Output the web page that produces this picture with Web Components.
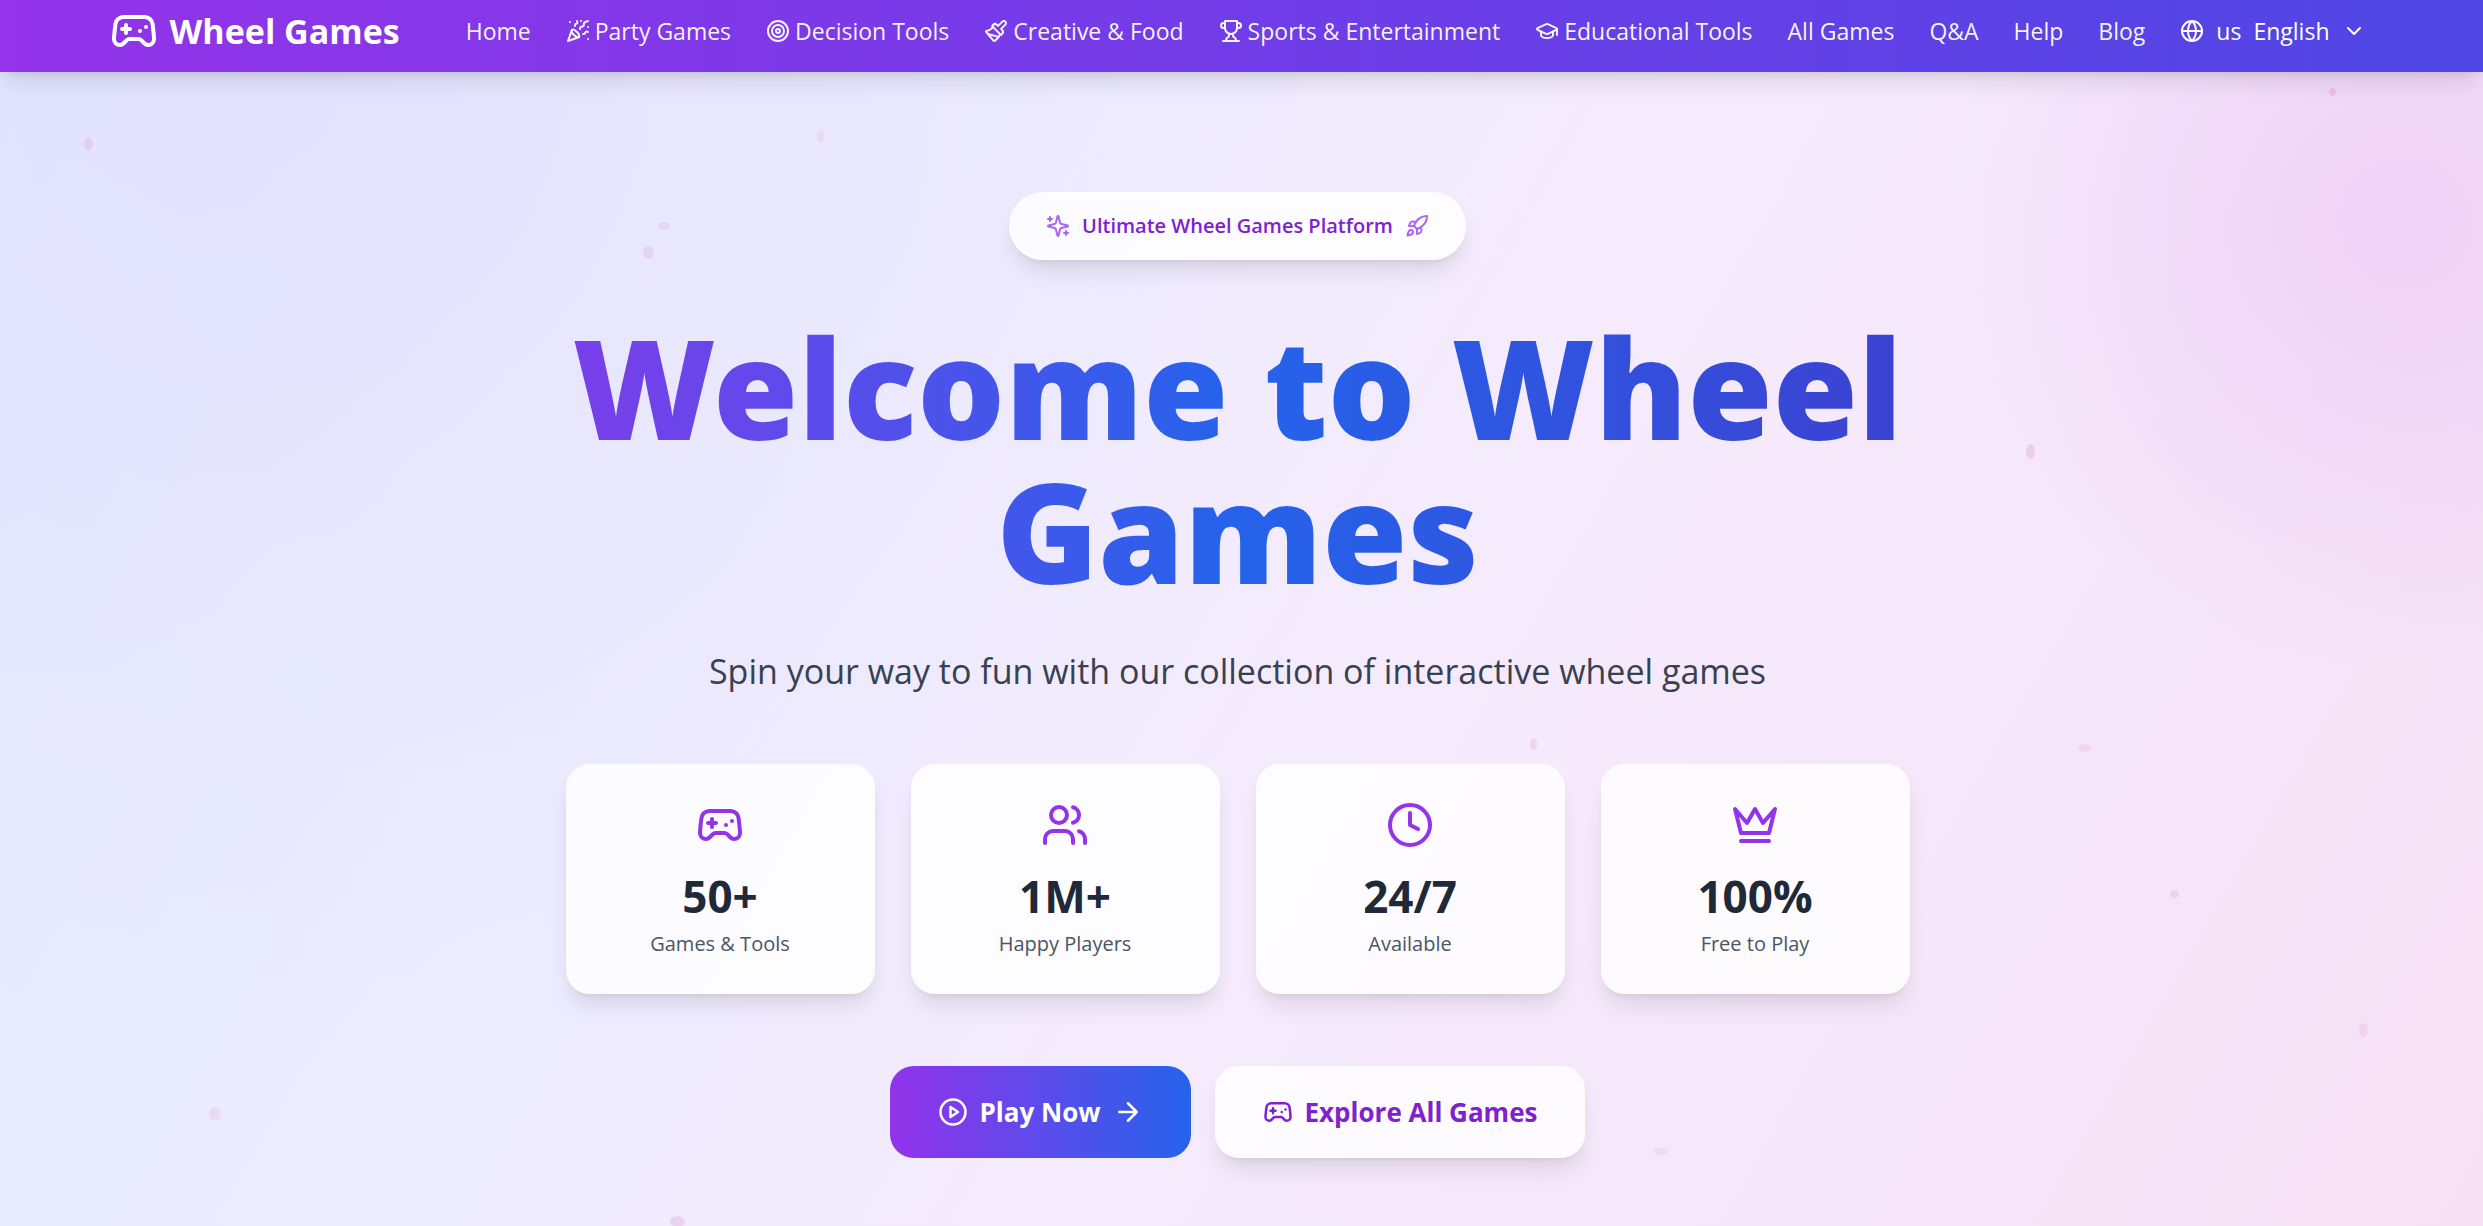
<!DOCTYPE html>
<html lang="en">
<head>
<meta charset="UTF-8">
<meta name="viewport" content="width=device-width, initial-scale=1.0">
<title>Wheel Games</title>
<style>
  :root {
    --purple: #9333ea;
    --purple-dark: #7e22ce;
    --blue: #2563eb;
    --indigo: #4f46e5;
    --card: rgba(255, 255, 255, 0.82);
    --shadow: 0 15px 23px -5px rgba(0, 0, 0, 0.1), 0 6px 9px -6px rgba(0, 0, 0, 0.1);
    --gutter: 8px;
  }
  body {
    margin: 0;
    font-family: "Open Sans", "Noto Sans", sans-serif;
    color: #1f2937;
    overflow-x: hidden;
  }
</style>
</head>
<body>
<site-header>
  <site-brand slot="brand">Wheel Games</site-brand>
  <nav-link href="#home">Home</nav-link>
  <nav-link href="#party" icon="party">Party Games</nav-link>
  <nav-link href="#decision" icon="target">Decision Tools</nav-link>
  <nav-link href="#creative" icon="brush">Creative &amp; Food</nav-link>
  <nav-link href="#sports" icon="trophy">Sports &amp; Entertainment</nav-link>
  <nav-link href="#education" icon="cap">Educational Tools</nav-link>
  <nav-link href="#all">All Games</nav-link>
  <nav-link href="#qa">Q&amp;A</nav-link>
  <nav-link href="#help">Help</nav-link>
  <nav-link href="#blog">Blog</nav-link>
  <language-button code="us">English</language-button>
</site-header>

<hero-section>
  <hero-badge slot="badge">Ultimate Wheel Games Platform</hero-badge>
  <span slot="title">Welcome to Wheel Games</span>
  <span slot="subtitle">Spin your way to fun with our collection of interactive wheel games</span>
  <stat-card slot="stats" icon="gamepad" value="50+">Games &amp; Tools</stat-card>
  <stat-card slot="stats" icon="users" value="1M+">Happy Players</stat-card>
  <stat-card slot="stats" icon="clock" value="24/7">Available</stat-card>
  <stat-card slot="stats" icon="crown" value="100%">Free to Play</stat-card>
  <action-link slot="actions" href="#play" icon="play" trailing="arrow" primary>Play Now</action-link>
  <action-link slot="actions" href="#all" icon="gamepad">Explore All Games</action-link>
</hero-section>

<script>
const ICONS = {
  gamepad: '<path d="M6 11h4M8 9v4M15 12h.01M18 10h.01"/><path d="M17.32 5H6.68a4 4 0 0 0-3.978 3.59c-.006.052-.01.101-.017.152C2.604 9.416 2 14.456 2 16a3 3 0 0 0 3 3c1 0 1.5-.5 2-1l1.414-1.414A2 2 0 0 1 9.828 16h4.344a2 2 0 0 1 1.414.586L17 18c.5.5 1 1 2 1a3 3 0 0 0 3-3c0-1.545-.604-6.584-.685-7.258-.007-.05-.011-.1-.017-.151A4 4 0 0 0 17.32 5z"/>',
  party: '<path d="M5.8 11.3 2 22l10.7-3.79M4 3h.01M22 8h.01M15 2h.01M22 20h.01"/><path d="m22 2-2.24.75a2.9 2.9 0 0 0-1.96 3.12c.1.86-.57 1.63-1.45 1.63h-.38c-.86 0-1.6.6-1.76 1.44L14 10"/><path d="m22 13-.82-.33c-.86-.34-1.82.2-1.98 1.11c-.11.7-.72 1.22-1.43 1.22H17"/><path d="m11 2 .33.82c.34.86-.2 1.82-1.11 1.98C9.52 4.9 9 5.52 9 6.23V7"/><path d="M11 13c1.93 1.93 2.83 4.17 2 5-.83.83-3.07-.07-5-2-1.93-1.93-2.83-4.17-2-5 .83-.83 3.07.07 5 2Z"/>',
  target: '<circle cx="12" cy="12" r="10"/><circle cx="12" cy="12" r="6"/><circle cx="12" cy="12" r="2"/>',
  brush: '<path d="m14.622 17.897-10.68-2.913"/><path d="M18.376 2.622a1 1 0 1 1 3.002 3.002L17.36 9.643a.5.5 0 0 0 0 .707l.944.944a2.41 2.41 0 0 1 0 3.408l-.944.944a.5.5 0 0 1-.707 0L8.354 7.348a.5.5 0 0 1 0-.707l.944-.944a2.41 2.41 0 0 1 3.408 0l.944.944a.5.5 0 0 0 .707 0z"/><path d="M9 8c-1.804 2.71-3.97 3.46-6.583 3.948a.507.507 0 0 0-.302.819l7.32 8.883a1 1 0 0 0 1.185.204C12.735 20.405 16 16.792 16 15"/>',
  trophy: '<path d="M6 9H4.5a2.5 2.5 0 0 1 0-5H6M18 9h1.5a2.5 2.5 0 0 0 0-5H18M4 22h16"/><path d="M10 14.66V17c0 .55-.47.98-.97 1.21C7.85 18.75 7 20.24 7 22M14 14.66V17c0 .55.47.98.97 1.21C16.15 18.75 17 20.24 17 22M18 2H6v7a6 6 0 0 0 12 0V2Z"/>',
  cap: '<path d="M21.42 10.922a1 1 0 0 0-.019-1.838L12.83 5.18a2 2 0 0 0-1.66 0L2.6 9.08a1 1 0 0 0 0 1.832l8.57 3.908a2 2 0 0 0 1.66 0z"/><path d="M22 10v6M6 12.5V16a6 3 0 0 0 12 0v-3.5"/>',
  globe: '<circle cx="12" cy="12" r="10"/><path d="M12 2a14.5 14.5 0 0 0 0 20 14.5 14.5 0 0 0 0-20M2 12h20"/>',
  chevron: '<path d="m6 9 6 6 6-6"/>',
  sparkles: '<path d="M9.937 15.5A2 2 0 0 0 8.5 14.063l-6.135-1.582a.5.5 0 0 1 0-.962L8.5 9.936A2 2 0 0 0 9.937 8.5l1.582-6.135a.5.5 0 0 1 .963 0L14.063 8.5A2 2 0 0 0 15.5 9.937l6.135 1.581a.5.5 0 0 1 0 .964L15.5 14.063a2 2 0 0 0-1.437 1.437l-1.582 6.135a.5.5 0 0 1-.963 0z"/><path d="M20 17v4M22 19h-4M4 3v4M6 5H2"/>',
  rocket: '<path d="M4.5 16.5c-1.5 1.26-2 5-2 5s3.74-.5 5-2c.71-.84.7-2.13-.09-2.91a2.18 2.18 0 0 0-2.91-.09z"/><path d="m12 15-3-3a22 22 0 0 1 2-3.95A12.88 12.88 0 0 1 22 2c0 2.72-.78 7.5-6 11a22.35 22.35 0 0 1-4 2z"/><path d="M9 12H4s.55-3.03 2-4c1.62-1.08 5 0 5 0M12 15v5s3.03-.55 4-2c1.08-1.62 0-5 0-5"/>',
  users: '<path d="M16 21v-2a4 4 0 0 0-4-4H6a4 4 0 0 0-4 4v2"/><circle cx="9" cy="7" r="4"/><path d="M22 21v-2a4 4 0 0 0-3-3.87M16 3.13a4 4 0 0 1 0 7.75"/>',
  clock: '<circle cx="12" cy="12" r="10"/><path d="M12 6v6l4 2"/>',
  crown: '<path d="m2 4 3 12h14l3-12-6 7-4-7-4 7-6-7zM5 20h14"/>',
  play: '<circle cx="12" cy="12" r="10"/><path d="m10 8 6 4-6 4z"/>',
  arrow: '<path d="M5 12h14M12 5l7 7-7 7"/>'
};

class UiIcon extends HTMLElement {
  constructor() {
    super();
    this.attachShadow({ mode: 'open' });
  }

  connectedCallback() {
    this.shadowRoot.innerHTML = `
      <style>
        :host { display: block; flex: none; width: var(--icon-size, 24px); height: var(--icon-size, 24px); }
        svg { display: block; width: 100%; height: 100%; }
      </style>
      <svg viewBox="0 0 24 24" fill="none" stroke="currentColor" stroke-width="2" stroke-linecap="round" stroke-linejoin="round" aria-hidden="true">${ICONS[this.getAttribute('name')]}</svg>
    `;
  }
}
customElements.define('ui-icon', UiIcon);

class SiteBrand extends HTMLElement {
  constructor() {
    super();
    this.attachShadow({ mode: 'open' });
    this.shadowRoot.innerHTML = `
      <style>
        :host { display: block; flex: none; }
        a { display: flex; align-items: center; gap: 12px; color: white; text-decoration: none; font-size: 34px; line-height: 48px; font-weight: 700; white-space: nowrap; }
        ui-icon { --icon-size: 48px; }
      </style>
      <a href="#home"><ui-icon name="gamepad"></ui-icon><slot></slot></a>
    `;
  }
}
customElements.define('site-brand', SiteBrand);

class NavLink extends HTMLElement {
  constructor() {
    super();
    this.attachShadow({ mode: 'open' });
  }

  connectedCallback() {
    const icon = this.getAttribute('icon');
    this.shadowRoot.innerHTML = `
      <style>
        :host { display: block; }
        a { display: flex; align-items: center; gap: 5px; color: rgba(255, 255, 255, 0.94); text-decoration: none; white-space: nowrap; }
        a:hover { color: white; }
      </style>
      <a href="${this.getAttribute('href')}">${icon ? `<ui-icon name="${icon}"></ui-icon>` : ''}<slot></slot></a>
    `;
  }
}
customElements.define('nav-link', NavLink);

class LanguageButton extends HTMLElement {
  constructor() {
    super();
    this.attachShadow({ mode: 'open' });
  }

  connectedCallback() {
    this.shadowRoot.innerHTML = `
      <style>
        :host { display: block; }
        button { display: flex; align-items: center; gap: 12px; padding: 0; border: none; background: none; color: white; font: inherit; cursor: pointer; white-space: nowrap; }
      </style>
      <button type="button" aria-haspopup="true"><ui-icon name="globe"></ui-icon><span>${this.getAttribute('code')}</span><slot></slot><ui-icon name="chevron"></ui-icon></button>
    `;
  }
}
customElements.define('language-button', LanguageButton);

class SiteHeader extends HTMLElement {
  constructor() {
    super();
    this.attachShadow({ mode: 'open' });
    this.shadowRoot.innerHTML = `
      <style>
        :host {
          display: block;
          position: sticky;
          top: 0;
          z-index: 10;
          padding: 7px var(--gutter) 17px 0;
          background: linear-gradient(to right, var(--purple), var(--indigo));
          box-shadow: 0 15px 23px -5px rgba(0, 0, 0, 0.1), 0 6px 9px -6px rgba(0, 0, 0, 0.1);
        }
        .bar { box-sizing: border-box; max-width: 2304px; margin: 0 auto; padding: 0 24px; display: flex; align-items: center; justify-content: space-between; gap: 36px; }
        nav { display: flex; align-items: center; gap: 35px; font-size: 23px; line-height: 36px; }
      </style>
      <header class="bar">
        <slot name="brand"></slot>
        <nav aria-label="Main"><slot></slot></nav>
      </header>
    `;
  }
}
customElements.define('site-header', SiteHeader);

class HeroBadge extends HTMLElement {
  constructor() {
    super();
    this.attachShadow({ mode: 'open' });
    this.shadowRoot.innerHTML = `
      <style>
        :host {
          display: inline-flex;
          align-items: center;
          gap: 12px;
          padding: 18px 36px;
          border: 1px solid rgba(255, 255, 255, 0.2);
          border-radius: 34px;
          background: var(--card);
          box-shadow: var(--shadow);
          color: var(--purple-dark);
          font-size: 20px;
          line-height: 30px;
          font-weight: 600;
        }
        ui-icon { color: var(--purple); opacity: 0.75; }
      </style>
      <ui-icon name="sparkles"></ui-icon><slot></slot><ui-icon name="rocket"></ui-icon>
    `;
  }
}
customElements.define('hero-badge', HeroBadge);

class StatCard extends HTMLElement {
  constructor() {
    super();
    this.attachShadow({ mode: 'open' });
  }

  connectedCallback() {
    this.shadowRoot.innerHTML = `
      <style>
        :host {
          display: flex;
          flex-direction: column;
          align-items: center;
          padding: 36px 36px 34px;
          border: 1px solid rgba(255, 255, 255, 0.2);
          border-radius: 24px;
          background: var(--card);
          box-shadow: var(--shadow);
        }
        ui-icon { --icon-size: 48px; color: var(--purple); margin-bottom: 20px; }
        .value { font-size: 44px; line-height: 54px; font-weight: 700; margin-bottom: 6px; }
        .label { font-size: 20px; line-height: 30px; color: #4b5563; white-space: nowrap; }
      </style>
      <ui-icon name="${this.getAttribute('icon')}"></ui-icon>
      <div class="value">${this.getAttribute('value')}</div>
      <div class="label"><slot></slot></div>
    `;
  }
}
customElements.define('stat-card', StatCard);

class ActionLink extends HTMLElement {
  constructor() {
    super();
    this.attachShadow({ mode: 'open' });
  }

  connectedCallback() {
    const trailing = this.getAttribute('trailing');
    this.shadowRoot.innerHTML = `
      <style>
        :host { display: block; }
        a {
          --icon-size: 30px;
          display: flex;
          align-items: center;
          gap: 12px;
          padding: 30px 48px;
          border-radius: 24px;
          background: var(--card);
          box-shadow: var(--shadow);
          color: var(--purple-dark);
          font-size: 26px;
          line-height: 32px;
          font-weight: 700;
          text-decoration: none;
          white-space: nowrap;
        }
        :host([primary]) a { background: linear-gradient(to right, var(--purple), var(--blue)); box-shadow: none; color: white; }
      </style>
      <a href="${this.getAttribute('href')}"><ui-icon name="${this.getAttribute('icon')}"></ui-icon><slot></slot>${trailing ? `<ui-icon name="${trailing}"></ui-icon>` : ''}</a>
    `;
  }
}
customElements.define('action-link', ActionLink);

const CONFETTI = [
  [3.4, 5.6, 9, 14, 0.1], [32.9, 5, 8, 13, 0.07], [26.5, 13, 12, 8, 0.08], [25.9, 15.1, 11, 13, 0.1],
  [93.8, 1.4, 7, 8, 0.14], [81.6, 32.2, 9, 15, 0.13], [61.6, 57.7, 7, 12, 0.11], [83.7, 58.2, 13, 8, 0.08],
  [87.4, 70.9, 9, 8, 0.1], [95, 82.4, 9, 14, 0.08], [8.4, 89.7, 12, 14, 0.08], [66.6, 93.2, 14, 7, 0.08],
  [27, 99.1, 15, 11, 0.12]
];

class ConfettiField extends HTMLElement {
  constructor() {
    super();
    this.attachShadow({ mode: 'open' });
    this.shadowRoot.innerHTML = `
      <style>
        :host { display: block; position: absolute; inset: 0; pointer-events: none; }
        i { position: absolute; border-radius: 50%; background: linear-gradient(to right, #a21caf, #db2777); }
      </style>
      ${CONFETTI.map(([x, y, w, h, o]) => `<i style="left:${x}%;top:${y}%;width:${w}px;height:${h}px;opacity:${o}"></i>`).join('')}
    `;
  }
}
customElements.define('confetti-field', ConfettiField);

class HeroSection extends HTMLElement {
  constructor() {
    super();
    this.attachShadow({ mode: 'open' });
    this.shadowRoot.innerHTML = `
      <style>
        :host {
          display: block;
          position: relative;
          overflow: hidden;
          box-sizing: border-box;
          min-height: calc(100vh - 72px);
          padding: 120px var(--gutter) 48px 0;
          background:
            radial-gradient(circle at 96.5% 146px, rgba(217, 150, 240, 0.25), rgba(217, 150, 240, 0) 450px),
            radial-gradient(circle at 10% 0%, rgba(210, 180, 250, 0.14), rgba(210, 180, 250, 0) 1000px),
            linear-gradient(120deg, #e4e9ff, #e9ebff 22%, #f5ebfd 56%, #f6e0f4);
        }
        .content { position: relative; max-width: 1728px; margin: 0 auto; display: flex; flex-direction: column; align-items: center; text-align: center; }
        h1 {
          width: 100%;
          margin: 54px 0 42px;
          font: 900 138px/144px "Noto Sans", "Open Sans", sans-serif;
          background: linear-gradient(to right, var(--purple), var(--blue), #4338ca);
          -webkit-background-clip: text;
          background-clip: text;
          color: transparent;
        }
        p { margin: 0 0 66px; font-size: 34px; line-height: 54px; color: #374151; }
        .stats { box-sizing: border-box; width: 100%; max-width: 1344px; display: grid; grid-template-columns: repeat(4, 1fr); gap: 36px; margin-bottom: 72px; }
        .actions { display: flex; justify-content: center; gap: 24px; }
      </style>
      <confetti-field></confetti-field>
      <div class="content">
        <slot name="badge"></slot>
        <h1><slot name="title"></slot></h1>
        <p><slot name="subtitle"></slot></p>
        <div class="stats"><slot name="stats"></slot></div>
        <div class="actions"><slot name="actions"></slot></div>
      </div>
    `;
  }
}
customElements.define('hero-section', HeroSection);
</script>
</body>
</html>
